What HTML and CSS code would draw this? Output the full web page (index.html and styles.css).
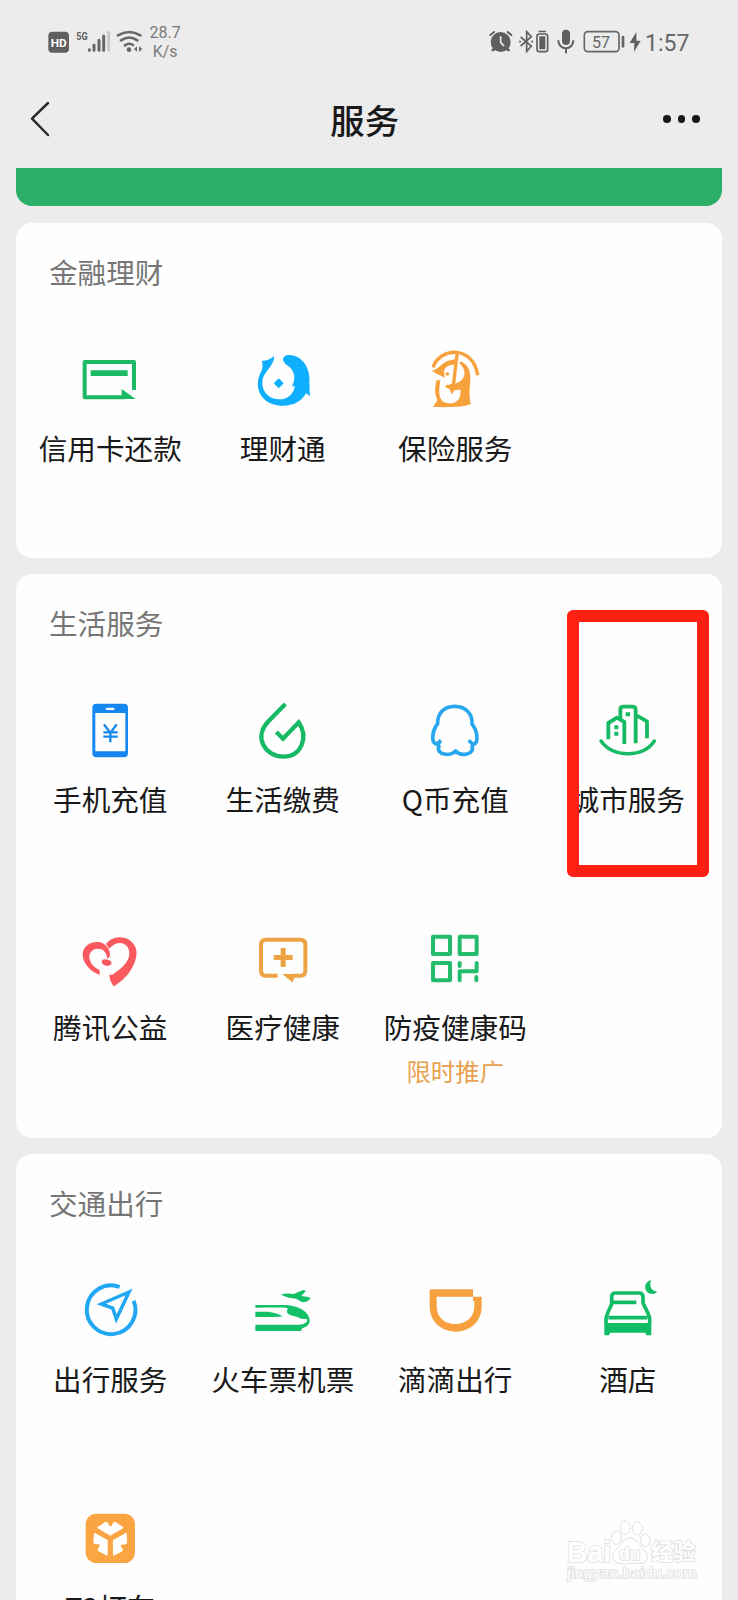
FILE: index.html
```html
<!DOCTYPE html>
<html lang="zh-CN">
<head>
<meta charset="utf-8">
<title>服务</title>
<link rel="stylesheet" href="styles.css">
</head>
<body>
<div class="screen">
  <header class="status">
    <svg class="status-left" viewBox="135 85 300 84">
      <rect x="145" y="96" width="62" height="63" rx="12" fill="#5f5f5f"/>
      <text x="176" y="142" class="hd" textLength="48" lengthAdjust="spacingAndGlyphs">HD</text>
      <text x="229" y="122" class="five-g" textLength="34" lengthAdjust="spacingAndGlyphs">5G</text>
      <g stroke="#666" stroke-width="9" stroke-linecap="round">
        <path d="M268 150v2M282 136v16M297 122v30M311 109v43"/>
        <path d="M326 98v54" stroke="#c9c9c9"/>
      </g>
      <g fill="none" stroke="#666" stroke-width="8" stroke-linecap="round">
        <path d="M354 107q34-20 67 0M363 122q25-17 49 0M375 137q12-9 24-1"/>
      </g>
      <circle cx="387" cy="150" r="7" fill="#666"/>
      <path d="M411 140v16l-9-8zM417 140v16l10-8z" fill="#666"/>
    </svg>
    <div class="speed"><span>28.7</span><span>K/s</span></div>
    <svg class="status-right" viewBox="350 85 465 84">
      <g fill="#5f5f5f">
        <circle cx="394" cy="127" r="30"/>
        <path d="M370 145l-5 9 8 1 8-6zM418 145l5 9-8 1-8-6z"/>
      </g>
      <path d="M363 106l11-9M426 106l-11-9" stroke="#5f5f5f" stroke-width="6" stroke-linecap="round"/>
      <path d="M394 110v18l10 11" fill="none" stroke="#ececec" stroke-width="5"/>
      <path d="M454 112l32 27-14 16V96l14 15-32 28" fill="none" stroke="#5f5f5f" stroke-width="5"/>
      <path d="M450 122l7 4-7 4zM484 126l7-4v8z" fill="#5f5f5f"/>
      <rect x="503" y="103" width="32" height="53" rx="7" fill="none" stroke="#5f5f5f" stroke-width="5"/>
      <path d="M508 93h22v5h-22zM510 110h18v39h-18z" fill="#5f5f5f"/>
      <rect x="578" y="90" width="24" height="46" rx="12" fill="#5f5f5f"/>
      <path d="M567 122c0 32 45 32 45 0M590 146v15" fill="none" stroke="#5f5f5f" stroke-width="6"/>
      <rect x="645" y="96" width="104" height="60" rx="10" fill="none" stroke="#666" stroke-width="5"/>
      <path d="M761 112v28" stroke="#666" stroke-width="8" stroke-linecap="round"/>
      <text x="695" y="145" class="battery" textLength="54" lengthAdjust="spacingAndGlyphs">57</text>
      <path d="M801 97l-20 33h14l-1 27 20-34h-13z" fill="#5f5f5f"/>
    </svg>
    <span class="time">1:57</span>
  </header>

  <nav class="navbar">
    <svg class="back" viewBox="86 300 66 114"><path d="M143 309L95 356l48 49" fill="none" stroke="#2b2b2b" stroke-width="7.5" stroke-linecap="round" stroke-linejoin="round"/></svg>
    <h1 class="title">服务</h1>
    <div class="more"><i></i><i></i><i></i></div>
  </nav>

  <main class="content">
    <div class="banner"></div>

    <section class="card">
      <h2 class="card-title">金融理财</h2>
      <div class="grid">
        <div class="item">
          <svg class="icon" viewBox="235 384 192 192">
            <path d="M403 510V426H255v106h120" fill="none" stroke="#1cba64" stroke-width="12" stroke-linejoin="round"/>
            <path d="M273 451h111v17H273zM366 507l42 30h-42z" fill="#1cba64"/>
          </svg>
          <span class="label">信用卡还款</span>
        </div>
        <div class="item">
          <svg class="icon" viewBox="752 384 192 192" fill="#10aeff">
            <path d="M822 408C803 422 796 422 785 422C788 440 787 446 780 460C758 505 785 557 848 557C880 557 903 545 917 520L930 529C926 515 929 505 927 490C932 445 905 405 866 405C852 405 845 414 850 425C856 437 880 440 882 472C882 482 879 490 875 500L884 497C880 522 862 538 837 538C805 538 785 515 786 486C787 455 822 440 822 408z"/>
            <path d="M835 475l15 15-15 15-15-15z"/>
          </svg>
          <span class="label">理财通</span>
        </div>
        <div class="item">
          <svg class="icon" viewBox="163 84 192 192">
            <path d="M193 142C214 81 314 75 327 166" fill="none" stroke="#f7a13d" stroke-width="10"/>
            <path d="M276 124C300 134 306 155 305 180C302 212 301 234 307 252C290 262 240 262 193 261L206 240C197 222 199 200 203 181H215C208 222 210 250 243 250C270 250 276 232 276 209L258 210L249 223L243 208L230 200L247 192L262 190C294 180 294 148 272 130z" fill="#f7a13d"/>
            <path d="M189 152C206 150 215 132 238 122L262 117V135C240 132 226 144 226 156L228 173C214 166 203 160 189 152z" fill="#f7a13d"/>
            <path d="M266 96L253 206" stroke="#f7a13d" stroke-width="10"/>
            <path d="M232 199h28" stroke="#f7a13d" stroke-width="9"/>
            <circle cx="236" cy="162" r="5.5" fill="#f7a13d"/>
          </svg>
          <span class="label">保险服务</span>
        </div>
      </div>
    </section>

    <section class="card">
      <h2 class="card-title">生活服务</h2>
      <div class="grid">
        <div class="item">
          <svg class="icon" viewBox="235 297 192 192">
            <path fill-rule="evenodd" d="M290 311h83q12 0 12 12v137q0 12-12 12h-83q-12 0-12-12V323q0-12 12-12zM287 339v115h90V339zM322 323a3 3 0 000 7h19a3 3 0 000-7z" fill="#1687f0"/>
            <path d="M313 373l19 26 19-26M332 399v28M311 397h43M311 410h43" fill="none" stroke="#1687f0" stroke-width="7"/>
          </svg>
          <span class="label">手机充值</span>
        </div>
        <div class="item">
          <svg class="icon" viewBox="752 297 192 192">
            <path d="M855 312l-52 53c-44 47-8 105 46 105 53 0 77-57 46-103l-47 49-20-20" fill="none" stroke="#17ba64" stroke-width="13"/>
          </svg>
          <span class="label">生活缴费</span>
        </div>
        <div class="item">
          <svg class="icon" viewBox="163 297 192 192">
            <path d="M217 421l-11 10c-17 4-18-29-4-53l5-7c-1-26 14-52 51-52s54 27 52 53l5 7c14 23 13 57-3 53l-12-11M214 426c-8 6-8 10-3 13-11 25 35 32 50 14 15 18 58 10 49-13 5-5 3-9-6-15" fill="none" stroke="#27a8ee" stroke-width="11" stroke-linejoin="round"/>
          </svg>
          <span class="label">Q币充值</span>
        </div>
        <div class="item">
          <svg class="icon" viewBox="680 297 192 192">
            <g fill="none" stroke="#17ba64" stroke-width="11.5" stroke-linejoin="round">
              <path d="M717 418v-49l26-16 22 13v66M753 355v-26q0-9 9-9h28q9 0 9 9v101M803 347l30 17v51"/>
              <path d="M695 423q27 38 81 38t79-38" stroke-linecap="round" stroke-width="10.5"/>
            </g>
            <path d="M769 337h13v12h-13zM735 376h12v12h-12zM735 395h12v12h-12z" fill="#17ba64"/>
          </svg>
          <span class="label">城市服务</span>
        </div>
        <div class="item">
          <svg class="icon" viewBox="235 81 192 192" fill="#f9595f">
            <path d="M300 225C271 214 249 190 249 163C250 125 307 112 325 145C331 155 332 162 330 170L323 176C320 155 310 146 295 146C277 147 269 158 269 170C270 188 282 202 300 210z"/>
            <path d="M319 132C344 98 401 108 410 150C415 192 380 238 342 259C334 248 329 238 329 223C333 226 337 225 341 222C374 200 394 176 388 152C382 126 352 120 329 146z"/>
            <path d="M306 184q2-8 13-6l10 3q8 4 6 12l-10 5c-12-1-19-6-19-14z"/>
          </svg>
          <span class="label">腾讯公益</span>
        </div>
        <div class="item">
          <svg class="icon" viewBox="752 81 192 192">
            <path d="M832 227h-35q-15 0-15-15v-78q0-15 15-15h103q15 0 15 15v78q0 15-15 15h-25" fill="none" stroke="#eda344" stroke-width="12"/>
            <path d="M846 222h42l-12 25zM841 144h15v21h21v15h-21v21h-15v-21h-21v-15h21z" fill="#eda344"/>
          </svg>
          <span class="label">医疗健康</span>
        </div>
        <div class="item">
          <svg class="icon" viewBox="163 81 192 192" fill="none" stroke="#24bd6c" stroke-width="12" stroke-linejoin="round">
            <path d="M193 110h51v52h-51zM273 110h51v52h-51zM193 189h51v52h-51z"/>
            <path d="M273 189v9M324 189v25h-51v27M323 231v10" stroke-linecap="round"/>
          </svg>
          <span class="label">防疫健康码</span>
          <span class="promo">限时推广</span>
        </div>
      </div>
      <div class="highlight"></div>
    </section>

    <section class="card">
      <h2 class="card-title">交通出行</h2>
      <div class="grid">
        <div class="item">
          <svg class="icon" viewBox="235 387 192 192" fill="none" stroke="#22a8f3" stroke-width="12">
            <path d="M360 411A73 73 0 1 0 402 452"/>
            <path d="M388 426l-83 36 34 12 11 33z" stroke-width="10.5"/>
          </svg>
          <span class="label">出行服务</span>
        </div>
        <div class="item">
          <svg class="icon" viewBox="752 387 192 192" fill="#12c068">
            <path d="M765 465h87c38 0 76 19 76 47 0 12-10 19-22 22l-4 9H765v-19h129c21 0 29-9 26-17-8 0-22 0-30-7-12-1-23-4-29-11-3-6 0-10 2-13-12-5-18-3-98-3z"/>
            <path d="M765 485h40q22 2 43 14-16 3-39 2h-44zM842 433q19-5 38-1l28-12 9 2-14 16 16 2 12 3q-4 10-13 12l-12 2-19-11-21-3q-16-2-24-10z"/>
          </svg>
          <span class="label">火车票机票</span>
        </div>
        <div class="item">
          <svg class="icon" viewBox="163 87 192 192">
            <path fill-rule="evenodd" d="M187 118h126v22h26v29c0 47-35 76-78 76s-78-30-78-76v-46q0-5 4-5zM204 140v28c0 35 24 54 56 54s57-20 57-54v-15h-4v-13z" fill="#f6a040"/>
          </svg>
          <span class="label">滴滴出行</span>
        </div>
        <div class="item">
          <svg class="icon" viewBox="680 87 192 192">
            <path d="M730 160l-3-2v-17q0-12 12-12h70q12 0 12 12v17c0 5 20 33 20 50v13M728 158c0 7-18 34-18 50v13M725 157h76M717 203h117" fill="none" stroke="#10bd64" stroke-width="11"/>
            <path d="M705 219h141v37h-15l-3-8H722l-3 8h-14zM846 91c-26 4-24 41 4 41 7 0 11-4 14-8-16 2-27-17-18-33z" fill="#10bd64"/>
          </svg>
          <span class="label">酒店</span>
        </div>
        <div class="item">
          <svg class="icon" viewBox="235 81 192 192">
            <rect x="258" y="101" width="148" height="148" rx="32" fill="#faa442"/>
            <g fill="#fff" stroke="#fff" stroke-width="4" stroke-linejoin="round">
              <path d="M295 143l23-15 5 1 5 11h9l5-11 5-1 22 15-37 22z"/>
              <path d="M295 143l23-15 5 1 5 11h9l5-11 5-1 22 15-37 22z" transform="rotate(120 332 176)"/>
              <path d="M295 143l23-15 5 1 5 11h9l5-11 5-1 22 15-37 22z" transform="rotate(240 332 176)"/>
            </g>
          </svg>
          <span class="label">T3打车</span>
        </div>
      </div>
    </section>
  </main>

  <svg class="watermark" viewBox="0 0 420 216">
    <g fill="#fff" stroke="#e0e0e0" stroke-width="3">
      <ellipse cx="154" cy="65" rx="15" ry="20"/>
      <ellipse cx="181" cy="35" rx="15" ry="20"/>
      <ellipse cx="217" cy="37" rx="15" ry="20"/>
      <ellipse cx="241" cy="73" rx="14" ry="19"/>
      <path d="M173 78q23-27 44 1l24 27c19 30-7 42-39 35-28 6-62 3-58-24 4-17 19-22 29-39z"/>
      <g paint-order="stroke" stroke-width="5">
        <text x="6" y="138" class="mark-latin" textLength="132" lengthAdjust="spacingAndGlyphs">Bai</text>
        <text x="162" y="131" class="mark-du" textLength="64" lengthAdjust="spacingAndGlyphs">du</text>
        <text x="258" y="133" class="mark-cjk">经验</text>
        <text x="7" y="187" class="mark-url" textLength="388" lengthAdjust="spacingAndGlyphs">jingyan.baidu.com</text>
      </g>
    </g>
  </svg>
</div>
</body>
</html>
```
FILE: styles.css
```css
* { box-sizing: border-box; }

body {
  margin: 0;
  background: #ececec;
  font-family: "Noto Sans CJK SC", sans-serif;
  color: #191919;
}

.screen {
  position: relative;
  width: 738px;
  height: 1600px;
  overflow: hidden;
}

svg { display: block; flex: none; }

.status {
  display: flex;
  align-items: center;
  height: 84px;
  padding: 0 48px 0 45px;
}

.status-left { width: 100px; height: 28px; }

.hd { font: 700 35px Roboto, sans-serif; fill: #fff; text-anchor: middle; }
.five-g { font: 700 35px Roboto, sans-serif; fill: #5f5f5f; }
.battery { font: 400 50px Roboto, sans-serif; fill: #666; text-anchor: middle; }

.speed {
  display: flex;
  flex-direction: column;
  align-items: center;
  margin-left: 4.5px;
  padding-top: 1px;
  font: 400 16px/18.5px Roboto, sans-serif;
  color: #7a7a7a;
}

.status-right { width: 155px; height: 28px; margin-left: auto; }

.time {
  width: 45px;
  margin-left: 4px;
  padding-top: 3px;
  font: 400 23px/28px Roboto, sans-serif;
  color: #666;
  white-space: nowrap;
}

.navbar {
  display: flex;
  align-items: center;
  justify-content: space-between;
  height: 84px;
  padding: 0 38px 14px 29px;
}

.back { width: 22px; height: 38px; }

.title {
  margin: 0;
  padding-left: 15px;
  font-size: 34.4px;
  line-height: 50px;
  font-weight: 500;
}

.more { display: flex; gap: 7px; }
.more i { width: 7.5px; height: 7.5px; border-radius: 50%; background: #191919; }

.content {
  display: flex;
  flex-direction: column;
  gap: 16px;
  padding: 0 16px;
}

.banner {
  height: 38.4px;
  margin-bottom: 0.6px;
  border-radius: 0 0 16px 16px;
  background: #2bae67;
}

.card {
  position: relative;
  padding: 0 8px 10.4px;
  border-radius: 16px;
  background: #fefefe;
}

.card-title {
  margin: 0;
  padding: 0 25px;
  font-size: 28.6px;
  line-height: 97px;
  font-weight: 400;
  color: #767676;
}

.grid {
  display: grid;
  grid-template-columns: repeat(4, 1fr);
  grid-auto-rows: 228px;
}

.item {
  display: flex;
  flex-direction: column;
  align-items: center;
  padding-top: 28px;
}

.icon { width: 64px; height: 64px; }

.label {
  margin-top: 15px;
  font-size: 28.6px;
  line-height: 42px;
  white-space: nowrap;
}

.promo {
  margin-top: 7px;
  font-size: 24.4px;
  line-height: 32px;
  color: #e8a150;
}

.highlight {
  position: absolute;
  left: 551px;
  top: 36px;
  width: 142px;
  height: 267px;
  border: 12px solid #fd2013;
  border-radius: 6px;
}

.watermark {
  position: absolute;
  left: 565px;
  top: 1516px;
  width: 140px;
  height: 72px;
}

.mark-latin { font: 700 88px "Liberation Sans", sans-serif; }
.mark-du { font: 700 54px "Liberation Sans", sans-serif; }
.mark-cjk { font: 700 67px "Noto Sans CJK SC", sans-serif; }
.mark-url { font: 400 42px "Liberation Sans", sans-serif; }
```
